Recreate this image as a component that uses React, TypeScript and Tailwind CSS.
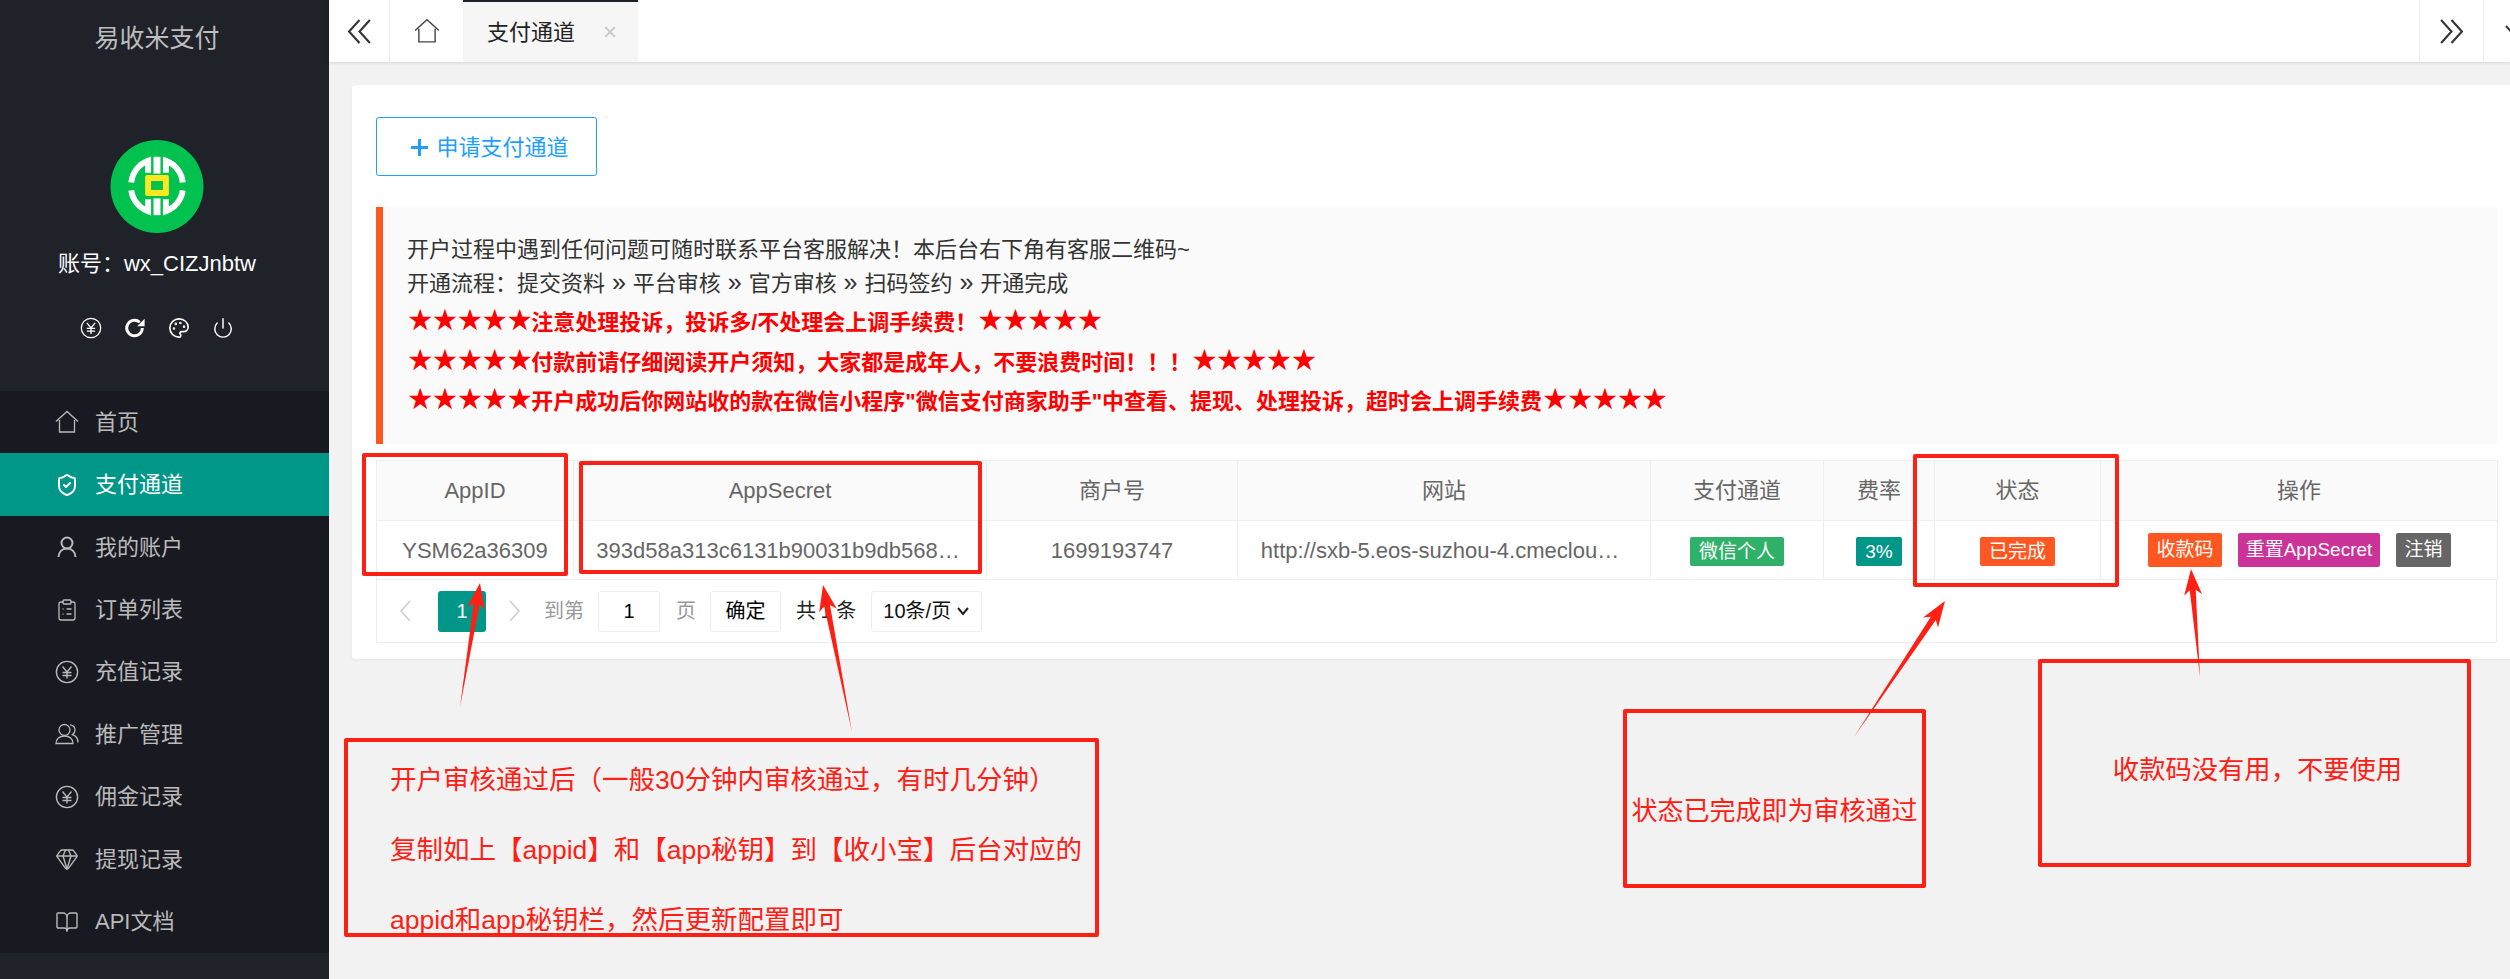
import React from 'react';
import { Palette, Power, ShieldCheck, ClipboardList, Gem, BookOpen } from 'lucide-react';

const Yen = ({ className }: { className?: string }) => (
  <svg viewBox="0 0 24 24" fill="none" stroke="currentColor" strokeWidth={1.4} className={className}>
    <circle cx="12" cy="12" r="10.6" />
    <path d="M7.500 6.500 12 12l4.500-5.500M12 12v6.500M7.500 12.500h9M7.500 15.500h9" />
  </svg>
);

const House = ({ className }: { className?: string }) => (
  <svg viewBox="0 0 24 24" fill="none" stroke="currentColor" strokeWidth={1.3} className={className}>
    <path d="M1 11.500 12 1.500l11 10M4.500 10v12h15V10" />
  </svg>
);

const Person = ({ className }: { className?: string }) => (
  <svg viewBox="0 0 24 24" fill="none" stroke="currentColor" strokeWidth={2} className={className}>
    <circle cx="12" cy="8" r="5.500" />
    <path d="M3.500 22c.3-5 3.400-8.500 8.500-8.500s8.200 3.500 8.500 8.500" />
  </svg>
);

const People = ({ className }: { className?: string }) => (
  <svg viewBox="0 0 24 24" fill="none" stroke="currentColor" strokeWidth={1.3} className={className}>
    <circle cx="9.500" cy="8" r="5.500" />
    <path d="M1 21.500c0-4.500 3.500-7.500 8.500-7.500s8.500 3 8.500 7.500zM15 2.800c3.500.5 5 3 5 5.200 0 2-1 3.600-2.500 4.600 3 1 5.500 4 5.500 7.900" />
  </svg>
);

const navItems = [
  { label: '首页', icon: <House className="w-[24px] h-[24px]" /> },
  { label: '支付通道', icon: <ShieldCheck className="w-[24px] h-[24px]" strokeWidth={2} />, active: true },
  { label: '我的账户', icon: <Person className="w-[24px] h-[24px]" /> },
  { label: '订单列表', icon: <ClipboardList className="w-[24px] h-[24px]" strokeWidth={1.3} /> },
  { label: '充值记录', icon: <Yen className="w-[24px] h-[24px]" /> },
  { label: '推广管理', icon: <People className="w-[24px] h-[24px]" /> },
  { label: '佣金记录', icon: <Yen className="w-[24px] h-[24px]" /> },
  { label: '提现记录', icon: <Gem className="w-[24px] h-[24px]" strokeWidth={1.4} /> },
  { label: 'API文档', icon: <BookOpen className="w-[24px] h-[24px]" strokeWidth={1.4} /> },
];

const Logo = () => (
  <svg viewBox="0 0 94 94" className="w-[94px] h-[93px]">
    <circle cx="47" cy="47" r="47" fill="#02c24f" />
    <g fill="none" stroke="#fff" strokeWidth="6">
      <path d="M21 43A26 26 0 0 1 38 21v12" />
      <path d="M73 43A26 26 0 0 0 56 21v12" />
      <path d="M21 51A26 26 0 0 0 38 72V60" />
      <path d="M73 51A26 26 0 0 1 56 72V60" />
    </g>
    <rect x="43.500" y="17" width="7" height="17" fill="#fff" />
    <rect x="43.500" y="59" width="7" height="17" fill="#fff" />
    <rect x="35" y="35.500" width="24" height="21" rx="2" fill="#ffe81f" />
    <rect x="41" y="41.500" width="12" height="9" fill="#02c24f" />
  </svg>
);

const Stars = () => <span className="text-[29.500px] leading-none font-normal tracking-[-1.600px] [font-family:'DejaVu_Sans',sans-serif]">★★★★★</span>;

const Sep = () => <span className="text-[25px] leading-none"> » </span>;

const Arrow = ({ tip, tail }: { tip: [number, number]; tail: [number, number] }) => {
  const dx = tail[0] - tip[0];
  const dy = tail[1] - tip[1];
  const len = Math.hypot(dx, dy);
  const ux = dx / len;
  const uy = dy / len;
  const at = (d: number, w: number) => `${tip[0] + ux * d - uy * w},${tip[1] + uy * d + ux * w}`;
  const points = [at(0, 0), at(26, 9), at(21, 3), `${tail[0]},${tail[1]}`, at(21, -3), at(26, -9)].join(' ');
  return <polygon points={points} fill="#ff2015" />;
};

const columns = [197, 413, 251, 413, 173, 111, 166, 397];

export default function App() {
  return (
    <div className="relative flex w-[2510px] h-[979px] overflow-hidden bg-[#f2f2f2] text-[22px] text-[#333] [font-family:'Liberation_Sans','Noto_Sans_CJK_SC',sans-serif]">
      <aside className="w-[329px] h-full shrink-0 bg-[#20222a] flex flex-col">
        <div className="w-[314px] h-[76px] pt-[2px] flex items-center justify-center text-[25px] text-[#bdbdbd]">易收米支付</div>
        <div className="w-[314px] h-[315px] pt-[64px] flex flex-col items-center text-white">
          <Logo />
          <div className="mt-[19px] h-[22px] flex items-center">账号：wx_CIZJnbtw</div>
          <div className="mt-[43px] flex items-center gap-[22px]">
            <Yen className="w-[22px] h-[22px]" />
            <svg viewBox="0 0 24 24" fill="none" stroke="currentColor" strokeWidth={3.2} className="w-[22px] h-[22px]">
              <path d="M20 12a8.500 8.500 0 1 1-2.800-6.300" />
              <path d="M22.500 2v8h-8z" fill="currentColor" stroke="none" />
            </svg>
            <Palette className="w-[22px] h-[22px]" strokeWidth={1.8} />
            <Power className="w-[22px] h-[22px]" strokeWidth={1.6} />
          </div>
        </div>
        <nav className="h-[562px] bg-[#191a21]">
          {navItems.map(item => (
            <div
              key={item.label}
              className={item.active
                ? 'h-[62.450px] flex items-center gap-[16px] pl-[55px] bg-[#009688] text-white'
                : 'h-[62.450px] flex items-center gap-[16px] pl-[55px] text-[#bababa]'}
            >
              {item.icon}
              <span>{item.label}</span>
            </div>
          ))}
        </nav>
      </aside>

      <main className="flex-1 min-w-0">
        <header className="h-[62px] bg-white flex shadow-[0_1px_3px_rgba(0,0,0,0.12)] text-[#222]">
          <div className="w-[61px] border-r border-[#f0f0f0] flex items-center justify-center">
            <svg viewBox="0 0 24 24" fill="none" stroke="#333" strokeWidth={2} className="w-[25px] h-[25px]">
              <path d="M12 1 2 12l10 11M22 1 12 12l10 11" />
            </svg>
          </div>
          <div className="w-[73px] flex items-center justify-center text-[#444]">
            <House className="w-[26px] h-[26px]" />
          </div>
          <div className="w-[175px] bg-[#f6f6f6] border-t-2 border-[#20222a] flex items-center pl-[24px]">
            <span>支付通道</span>
            <span className="ml-[28px] text-[#c8c8c8] text-[24px] leading-none">×</span>
          </div>
          <div className="flex-1" />
          <div className="w-[64px] border-l border-[#f0f0f0] flex items-center justify-center">
            <svg viewBox="0 0 24 24" fill="none" stroke="#333" strokeWidth={2} className="w-[25px] h-[25px]">
              <path d="M2 1l10 11L2 23M12 1l10 11-10 11" />
            </svg>
          </div>
          <div className="w-[27px] border-l border-[#f0f0f0] flex items-center pl-[20px] overflow-hidden">
            <svg viewBox="0 0 24 24" fill="none" stroke="#333" strokeWidth={2} className="w-[24px] h-[24px] shrink-0">
              <path d="M2 7l10 11L22 7" />
            </svg>
          </div>
        </header>

        <section className="mt-[23px] ml-[23px] w-[2169px] h-[574px] bg-white rounded-[3px] shadow-[0_1px_3px_rgba(0,0,0,0.06)] pt-[32px] px-[24px]">
          <button className="w-[221px] h-[59px] pl-[7px] pt-[2px] border border-[#1e9fff] rounded-[3px] text-[#1e9fff] flex items-center justify-center gap-[8px]">
            <span className="relative w-[17px] h-[17px]">
              <span className="absolute left-0 top-[7px] w-[17px] h-[3px] bg-[#1e9fff]" />
              <span className="absolute left-[7px] top-0 w-[3px] h-[17px] bg-[#1e9fff]" />
            </span>
            申请支付通道
          </button>

          <div className="mt-[31px] w-[2121px] h-[237px] bg-[#fafafa] border-l-[7px] border-[#ff5722] pl-[24px] pt-[26px]">
            <p className="h-[34px] leading-[34px]">开户过程中遇到任何问题可随时联系平台客服解决！本后台右下角有客服二维码~</p>
            <p className="h-[36px] leading-[34px]">开通流程：提交资料<Sep />平台审核<Sep />官方审核<Sep />扫码签约<Sep />开通完成</p>
            <div className="text-[#ff0000] font-bold">
              <p className="h-[39.500px] leading-[39.500px]"><Stars />注意处理投诉，投诉多/不处理会上调手续费！<Stars /></p>
              <p className="h-[39.500px] leading-[39.500px]"><Stars />付款前请仔细阅读开户须知，大家都是成年人，不要浪费时间！！！<Stars /></p>
              <p className="h-[39.500px] leading-[39.500px]"><Stars />开户成功后你网站收的款在微信小程序"微信支付商家助手"中查看、提现、处理投诉，超时会上调手续费<Stars /></p>
            </div>
          </div>

          <div className="mt-[16px] w-[2121px] text-[#666]">
            <table className="w-full table-fixed border-collapse">
              <colgroup>
                {columns.map((w, i) => <col key={i} width={w} />)}
              </colgroup>
              <thead>
                <tr className="h-[60px] bg-[#fafafa]">
                  {['AppID', 'AppSecret', '商户号', '网站', '支付通道', '费率', '状态', '操作'].map(h => (
                    <th key={h} className="border border-[#eee] font-normal text-center">{h}</th>
                  ))}
                </tr>
              </thead>
              <tbody>
                <tr className="h-[59px]">
                  <td className="border border-[#eee] text-center">YSM62a36309</td>
                  <td className="border border-[#eee] text-center pr-[4px]">393d58a313c6131b90031b9db568…</td>
                  <td className="border border-[#eee] text-center">1699193747</td>
                  <td className="border border-[#eee] text-center pr-[8px]">http://sxb-5.eos-suzhou-4.cmeclou…</td>
                  <td className="border border-[#eee] text-center">
                    <span className="inline-flex items-center justify-center w-[94px] h-[29px] rounded-[2px] bg-[#2fb16a] text-white text-[19px]">微信个人</span>
                  </td>
                  <td className="border border-[#eee] text-center">
                    <span className="inline-flex items-center justify-center w-[46px] h-[29px] rounded-[2px] bg-[#009688] text-white text-[19px]">3%</span>
                  </td>
                  <td className="border border-[#eee] text-center">
                    <span className="inline-flex items-center justify-center w-[75px] h-[29px] rounded-[2px] bg-[#ff5722] text-white text-[19px]">已完成</span>
                  </td>
                  <td className="border border-[#eee] pl-[47px]">
                    <div className="flex gap-[16px] text-white text-[19px]">
                      <span className="w-[74px] h-[34px] flex items-center justify-center rounded-[2px] bg-[#ff5722]">收款码</span>
                      <span className="w-[142px] h-[34px] flex items-center justify-center rounded-[2px] bg-[#cc3399]">重置AppSecret</span>
                      <span className="w-[55px] h-[34px] flex items-center justify-center rounded-[2px] bg-[#666]">注销</span>
                    </div>
                  </td>
                </tr>
              </tbody>
            </table>
            <div className="h-[63px] border border-t-0 border-[#eee] flex items-center text-[20px] pl-[22px]">
              <svg viewBox="0 0 12 24" fill="none" stroke="#ccc" strokeWidth={1.5} className="w-[12px] h-[24px]">
                <path d="M11 2 2 12l9 10" />
              </svg>
              <span className="ml-[27px] w-[48px] h-[41px] flex items-center justify-center rounded-[3px] bg-[#009688] text-white">1</span>
              <svg viewBox="0 0 12 24" fill="none" stroke="#ccc" strokeWidth={1.5} className="ml-[23px] w-[12px] h-[24px]">
                <path d="m1 2 9 10-9 10" />
              </svg>
              <span className="ml-[23px] text-[#999]">到第</span>
              <span className="ml-[14px] w-[62px] h-[41px] flex items-center justify-center rounded-[3px] border border-[#eee] text-[#000]">1</span>
              <span className="ml-[16px] text-[#999]">页</span>
              <span className="ml-[14px] w-[71px] h-[41px] flex items-center justify-center rounded-[3px] border border-[#eee] text-[#000]">确定</span>
              <span className="ml-[15px] text-[#222] tracking-[-0.500px]">共 1 条</span>
              <span className="ml-[15px] w-[111px] h-[41px] flex items-center justify-center gap-[6px] rounded-[3px] border border-[#eee] text-[#111]">
                10条/页
                <svg viewBox="0 0 12 12" fill="none" stroke="#222" strokeWidth={2} className="w-[12px] h-[12px]">
                  <path d="m1 3 5 6 5-6" />
                </svg>
              </span>
            </div>
          </div>
        </section>
      </main>

      {/* red annotations drawn on top of the screenshot */}
      <div className="absolute left-[362px] top-[453px] w-[206px] h-[123px] border-4 border-[#ff2015] rounded-[2px]" />
      <div className="absolute left-[579px] top-[461px] w-[403px] h-[113px] border-4 border-[#ff2015] rounded-[2px]" />
      <div className="absolute left-[1913px] top-[454px] w-[206px] h-[133px] border-4 border-[#ff2015] rounded-[2px]" />

      <div className="absolute left-[344px] top-[738px] w-[755px] h-[199px] border-4 border-[#ff2015] rounded-[2px] pl-[42px] pt-[3px] text-[26.500px] leading-[70px] text-[#ff2015] whitespace-nowrap">
        <p>开户审核通过后（一般30分钟内审核通过，有时几分钟）</p>
        <p>复制如上【appid】和【app秘钥】到【收小宝】后台对应的</p>
        <p>appid和app秘钥栏，然后更新配置即可</p>
      </div>
      <div className="absolute left-[1623px] top-[709px] w-[303px] h-[179px] border-4 border-[#ff2015] rounded-[2px] pt-[26px] flex items-center justify-center text-[26px] text-[#ff2015] whitespace-nowrap">
        状态已完成即为审核通过
      </div>
      <div className="absolute left-[2038px] top-[659px] w-[433px] h-[208px] border-4 border-[#ff2015] rounded-[2px] pt-[16px] pl-[6px] flex items-center justify-center text-[26.300px] text-[#ff2015] whitespace-nowrap">
        收款码没有用，不要使用
      </div>

      <svg viewBox="0 0 2510 979" className="absolute inset-0 w-[2510px] h-[979px] pointer-events-none">
        <Arrow tip={[480, 583]} tail={[460, 707]} />
        <Arrow tip={[823, 585]} tail={[852, 732]} />
        <Arrow tip={[1945, 601]} tail={[1854, 737]} />
        <Arrow tip={[2191, 569]} tail={[2200, 677]} />
      </svg>
    </div>
  );
}
